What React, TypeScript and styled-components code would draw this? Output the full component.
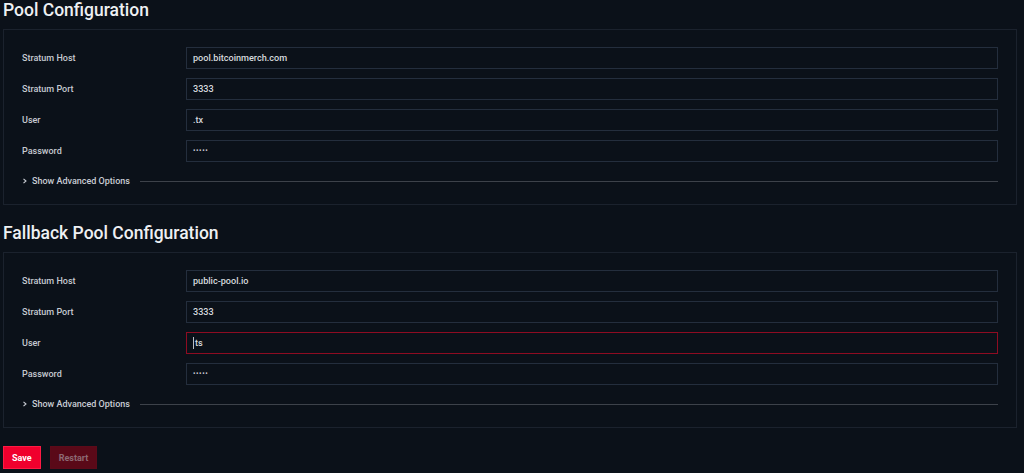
import React from "react";
import styled, { createGlobalStyle } from "styled-components";

const GlobalStyle = createGlobalStyle`
  html, body {
    margin: 0;
    padding: 0;
    background: #0b1119;
  }
  body {
    font-family: Roboto, "Noto Sans", Arial, sans-serif;
    color: #d3d6dc;
  }
`;

const Page = styled.main`
  width: 1024px;
  min-height: 473px;
  box-sizing: border-box;
  padding: 0 7px 0 3px;
  display: flex;
  flex-direction: column;
`;

const SectionTitle = styled.h2<{ $top?: number }>`
  margin: ${(p) => p.$top ?? 0}px 0 9px 0;
  font-size: 17.5px;
  line-height: 20px;
  font-weight: 500;
  color: #eef0f3;
`;

const Card = styled.section`
  border: 1px solid #1b222d;
  background: #0b1119;
  padding: 17px 18px 16px 18px;
  display: flex;
  flex-direction: column;
  gap: 9px;
`;

const Row = styled.div`
  display: grid;
  grid-template-columns: 164px 1fr;
  align-items: center;
`;

const Label = styled.label`
  font-size: 9px;
  font-weight: 500;
  color: #c6cad1;
`;

const Field = styled.div<{ $invalid?: boolean }>`
  height: 22px;
  box-sizing: border-box;
  border: 1px solid ${(p) => (p.$invalid ? "#8e0c22" : "#242e3d")};
  background: #0b1119;
  padding: 0 6px;
  display: flex;
  align-items: center;
  font-size: 9.1px;
  font-weight: 500;
  color: #d6d9de;
`;

const Dots = styled.span`
  font-size: 7px;
  letter-spacing: 0.6px;
  color: #c8ccd3;
`;

const Caret = styled.span`
  display: inline-block;
  width: 1px;
  height: 12px;
  background: #b9bec6;
  margin-right: 1px;
`;

const Advanced = styled.button`
  margin-top: 3px;
  height: 14px;
  display: flex;
  align-items: center;
  background: none;
  border: 0;
  padding: 0;
  color: #c9cdd4;
  font-family: inherit;
  font-size: 9px;
  font-weight: 500;
  cursor: pointer;
  text-align: left;
`;

const Chevron = styled.svg`
  width: 6px;
  height: 6px;
  margin-right: 4px;
  flex: none;
`;

const AdvText = styled.span`
  flex: none;
`;

const Rule = styled.span`
  flex: 1;
  height: 1px;
  background: #3d424a;
  margin-left: 10px;
`;

const Actions = styled.div`
  margin-top: 18px;
  display: flex;
  gap: 9px;
`;

const Button = styled.button<{ $disabled?: boolean }>`
  height: 23px;
  box-sizing: border-box;
  padding: 0 8px;
  border: 1px solid ${(p) => (p.$disabled ? "#5c0a19" : "#ff1a44")};
  background: ${(p) => (p.$disabled ? "#5a0918" : "#f0002d")};
  color: ${(p) => (p.$disabled ? "#8d6a74" : "#ffffff")};
  font-family: inherit;
  font-size: 9px;
  font-weight: 700;
  cursor: ${(p) => (p.$disabled ? "default" : "pointer")};
`;

type PoolProps = {
  host: string;
  port: string;
  user: React.ReactNode;
  userInvalid?: boolean;
};

const PoolCard: React.FC<PoolProps> = ({ host, port, user, userInvalid }) => (
  <Card>
    <Row>
      <Label>Stratum Host</Label>
      <Field>{host}</Field>
    </Row>
    <Row>
      <Label>Stratum Port</Label>
      <Field>{port}</Field>
    </Row>
    <Row>
      <Label>User</Label>
      <Field $invalid={userInvalid}>{user}</Field>
    </Row>
    <Row>
      <Label>Password</Label>
      <Field>
        <Dots>•••••</Dots>
      </Field>
    </Row>
    <Advanced type="button">
      <Chevron viewBox="0 0 6 6">
        <path d="M1.5 0.8 L4 3 L1.5 5.2" fill="none" stroke="#c9cdd4" strokeWidth="1.1" />
      </Chevron>
      <AdvText>Show Advanced Options</AdvText>
      <Rule />
    </Advanced>
  </Card>
);

export default function App() {
  return (
    <>
      <GlobalStyle />
      <Page>
        <SectionTitle>Pool Configuration</SectionTitle>
        <PoolCard host="pool.bitcoinmerch.com" port="3333" user=".tx" />
        <SectionTitle $top={18}>Fallback Pool Configuration</SectionTitle>
        <PoolCard
          host="public-pool.io"
          port="3333"
          userInvalid
          user={
            <>
              <Caret />
              ts
            </>
          }
        />
        <Actions>
          <Button type="button">Save</Button>
          <Button type="button" $disabled>
            Restart
          </Button>
        </Actions>
      </Page>
    </>
  );
}
